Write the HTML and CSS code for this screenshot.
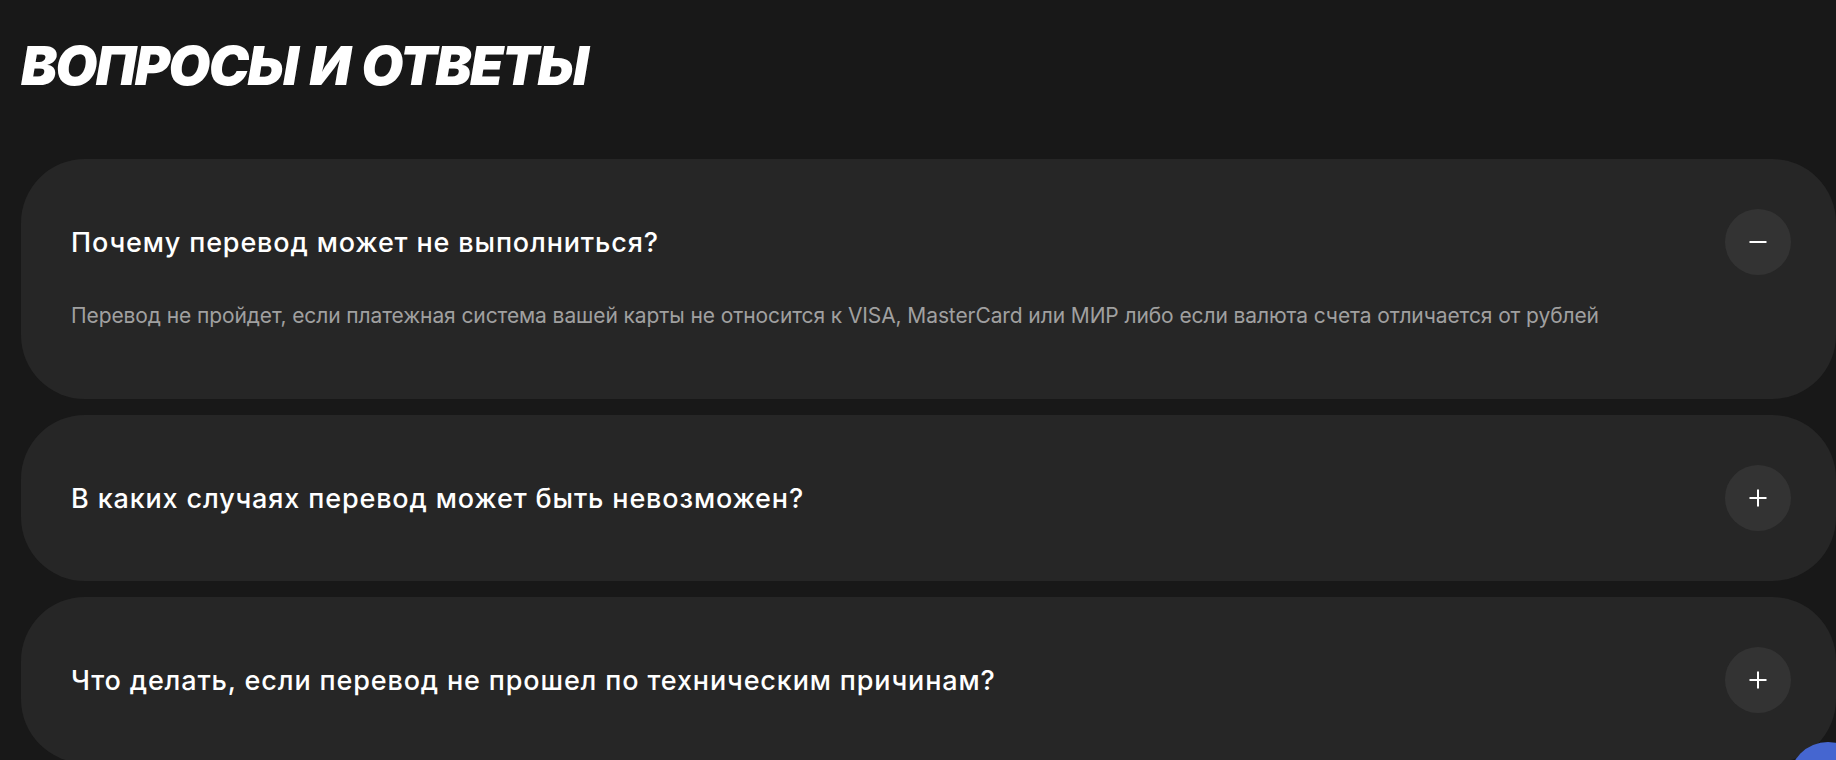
FILE: index.html
```html
<!DOCTYPE html>
<html lang="ru">
<head>
  <meta charset="UTF-8" />
  <meta name="viewport" content="width=device-width, initial-scale=1.0"/>
  <title>Вопросы и ответы</title>
  <link rel="stylesheet" href="styles.css">
</head>
<body>
  <section class="faq">
    <h1 class="faq-title">ВОПРОСЫ И ОТВЕТЫ</h1>

    <div class="faq-list">
      <div class="faq-item open" onclick="toggleItem(this)">
        <div class="faq-head">
          <span class="faq-question">Почему перевод может не выполниться?</span>
          <span class="faq-toggle">
            <svg width="18" height="18" viewBox="0 0 18 18"><path d="M0.5 9h17" stroke="#fff" stroke-width="2"/></svg>
          </span>
        </div>
        <p class="faq-answer">
          Перевод не пройдет, если платежная система вашей карты не относится к VISA, MasterCard или МИР либо если валюта счета отличается от рублей
        </p>
      </div>

      <div class="faq-item" onclick="toggleItem(this)">
        <div class="faq-head">
          <span class="faq-question">В каких случаях перевод может быть невозможен?</span>
          <span class="faq-toggle">
            <svg width="18" height="18" viewBox="0 0 18 18"><path d="M0.5 9h17M9 0.5v17" stroke="#fff" stroke-width="2"/></svg>
          </span>
        </div>
      </div>

      <div class="faq-item" onclick="toggleItem(this)">
        <div class="faq-head">
          <span class="faq-question">Что делать, если перевод не прошел по техническим причинам?</span>
          <span class="faq-toggle">
            <svg width="18" height="18" viewBox="0 0 18 18"><path d="M0.5 9h17M9 0.5v17" stroke="#fff" stroke-width="2"/></svg>
          </span>
        </div>
      </div>
    </div>
  </section>

  <button class="chat-button" aria-label="Чат"></button>

  <script>
    function toggleItem(el) {
      el.classList.toggle('open');
    }
  </script>
</body>
</html>
```

FILE: styles.css
```css
* { box-sizing: border-box; margin: 0; padding: 0; }
body {
  background-color: #181818;
  color: #ffffff;
  font-family: Inter, "Noto Sans", sans-serif;
  min-height: 100vh;
  overflow: hidden;
}
.faq {
  padding: 32px 0 0 21px;
}
.faq-title {
  font-size: 54px;
  font-style: italic;
  font-weight: 900;
  letter-spacing: -1.6px;
  line-height: 68px;
  margin-bottom: 59px;
  word-spacing: 3px;
}
.faq-list {
  display: flex;
  flex-direction: column;
  gap: 16px;
}
.faq-item {
  background-color: #262626;
  border-radius: 64px;
  cursor: pointer;
  padding: 50px 45px 50px 50px;
}
.faq-head {
  align-items: center;
  display: flex;
  justify-content: space-between;
}
.faq-question {
  font-size: 27px;
  font-weight: 500;
  letter-spacing: 0.85px;
}
.faq-toggle {
  align-items: center;
  background-color: #333333;
  border-radius: 50%;
  display: flex;
  height: 66px;
  justify-content: center;
  width: 66px;
}
.faq-answer {
  color: #a0a0a0;
  display: none;
  font-size: 21px;
  letter-spacing: -0.1px;
  line-height: 28px;
  margin-top: 27px;
  padding-bottom: 19px;
}
.faq-item.open .faq-answer { display: block; }
.chat-button {
  background-color: #4566d0;
  border: none;
  border-radius: 50%;
  bottom: -60px;
  height: 78px;
  position: fixed;
  right: -31px;
  width: 78px;
}
```
